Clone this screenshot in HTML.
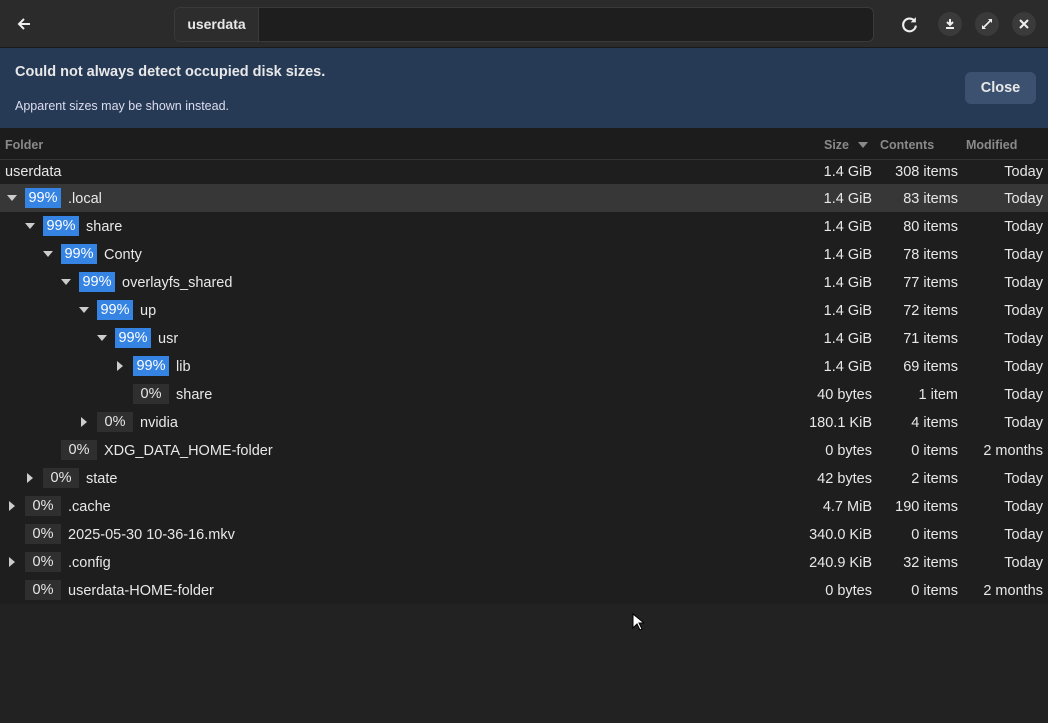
<!DOCTYPE html>
<html><head><meta charset="utf-8"><style>
*{margin:0;padding:0;box-sizing:border-box}
body{width:1048px;height:723px;background:#222;font-family:"Liberation Sans","DejaVu Sans",sans-serif;color:#e8e8e8;position:relative;overflow:hidden;font-size:14.5px}
.hdr{position:absolute;left:0;top:0;width:1048px;height:48px;background:#2b2b2b;border-bottom:1px solid #1a1a1a}
.path{position:absolute;left:174px;top:7px;width:700px;height:35px;background:#1e1e1e;border:1px solid #3a3a3a;border-radius:6px}
.path .seg{position:absolute;left:0;top:0;height:33px;width:84px;background:#2d2d2d;border-right:1px solid #3a3a3a;border-radius:5px 0 0 5px;font-weight:bold;font-size:14px;line-height:33px;text-align:center}
.cb{position:absolute;top:12px;width:24px;height:24px;border-radius:12px;background:#3a3a3a}
.ban{position:absolute;left:0;top:48px;width:1048px;height:80px;background:#263a56}
.ban b{position:absolute;left:15px;top:16px;font-size:14.5px}
.ban span{position:absolute;left:15px;top:51px;font-size:12.5px;color:#dde}
.close{position:absolute;left:965px;top:72px;width:71px;height:32px;background:#3c5170;border-radius:6px;font-weight:bold;line-height:32px;text-align:center;font-size:14.5px}
.ch{position:absolute;left:0;top:128px;width:1048px;height:32px;background:#1c1c1c;border-bottom:1px solid #333;color:#8a8a8a;font-weight:bold;font-size:12.5px}
.ch div{position:absolute;top:10px}
.row{position:absolute;left:0;width:1048px;height:28px;background:#1e1e1e;line-height:30px}
.row .n{position:absolute;white-space:nowrap}
.row .s,.row .c,.row .m{position:absolute;text-align:right}
.s{right:176px}.c{right:90px}.m{right:5px}
.bd{position:absolute;top:4px;width:36px;height:20px;line-height:21px;text-align:center;background:#2f2f2f}
.bd.b{background:#3584e4;color:#fff}
.ar{position:absolute;top:10px;width:0;height:0}
.ar.d{border-left:5px solid transparent;border-right:5px solid transparent;border-top:6px solid #ccc;top:11px}
.ar.r{border-top:5px solid transparent;border-bottom:5px solid transparent;border-left:6px solid #ccc;top:9px}
</style></head><body>
<div class="hdr">
<svg style="position:absolute;left:16px;top:16px" width="16" height="16" viewBox="0 0 16 16"><path d="M14 8H3M8 3L3 8l5 5" stroke="#eee" stroke-width="2" fill="none"/></svg>
<div class="path"><div class="seg">userdata</div></div>
<svg style="position:absolute;left:901px;top:16px" width="17" height="17" viewBox="0 0 16 16"><path d="M13 5A6 6 0 1 0 14 9" stroke="#eee" stroke-width="2" fill="none"/><path d="M14 1v5h-5z" fill="#eee"/></svg>
<div class="cb" style="left:938px"></div><svg style="position:absolute;left:944px;top:18px" width="12" height="12" viewBox="0 0 12 12"><path d="M6 1v6M3 4l3 3 3-3M2 10h8" stroke="#eee" stroke-width="2" fill="none"/></svg>
<div class="cb" style="left:975px"></div><svg style="position:absolute;left:981px;top:18px" width="12" height="12" viewBox="0 0 12 12"><path d="M7 1h4v4zM5 11H1V7z" fill="#eee"/><path d="M9 3L3 9" stroke="#eee" stroke-width="1.6"/></svg>
<div class="cb" style="left:1012px"></div><svg style="position:absolute;left:1019px;top:19px" width="10" height="10" viewBox="0 0 10 10"><path d="M1 1l8 8M9 1l-8 8" stroke="#eee" stroke-width="2"/></svg>
</div>
<div class="ban"><b>Could not always detect occupied disk sizes.</b><span>Apparent sizes may be shown instead.</span></div>
<div class="close">Close</div>
<div class="ch"><div style="left:5px">Folder</div><div style="left:824px">Size</div>
<div style="left:858px;top:14px;width:0;height:0;border-left:5px solid transparent;border-right:5px solid transparent;border-top:6px solid #8a8a8a"></div>
<div style="left:880px">Contents</div><div style="left:966px">Modified</div></div>

<div class="row" style="top:160px;height:24px;line-height:24px"><span class="n" style="left:5px">userdata</span><span class="s">1.4 GiB</span><span class="c">308 items</span><span class="m">Today</span></div>

<div class="row" style="top:184px;background:#373737"><span class="ar d" style="left:7px"></span><span class="bd b" style="left:25px">99%</span><span class="n" style="left:68px">.local</span><span class="s">1.4 GiB</span><span class="c">83 items</span><span class="m">Today</span></div>
<div class="row" style="top:212px"><span class="ar d" style="left:25px"></span><span class="bd b" style="left:43px">99%</span><span class="n" style="left:86px">share</span><span class="s">1.4 GiB</span><span class="c">80 items</span><span class="m">Today</span></div>
<div class="row" style="top:240px"><span class="ar d" style="left:43px"></span><span class="bd b" style="left:61px">99%</span><span class="n" style="left:104px">Conty</span><span class="s">1.4 GiB</span><span class="c">78 items</span><span class="m">Today</span></div>
<div class="row" style="top:268px"><span class="ar d" style="left:61px"></span><span class="bd b" style="left:79px">99%</span><span class="n" style="left:122px">overlayfs_shared</span><span class="s">1.4 GiB</span><span class="c">77 items</span><span class="m">Today</span></div>
<div class="row" style="top:296px"><span class="ar d" style="left:79px"></span><span class="bd b" style="left:97px">99%</span><span class="n" style="left:140px">up</span><span class="s">1.4 GiB</span><span class="c">72 items</span><span class="m">Today</span></div>
<div class="row" style="top:324px"><span class="ar d" style="left:97px"></span><span class="bd b" style="left:115px">99%</span><span class="n" style="left:158px">usr</span><span class="s">1.4 GiB</span><span class="c">71 items</span><span class="m">Today</span></div>
<div class="row" style="top:352px"><span class="ar r" style="left:117px"></span><span class="bd b" style="left:133px">99%</span><span class="n" style="left:176px">lib</span><span class="s">1.4 GiB</span><span class="c">69 items</span><span class="m">Today</span></div>
<div class="row" style="top:380px"><span class="bd" style="left:133px">0%</span><span class="n" style="left:176px">share</span><span class="s">40 bytes</span><span class="c">1 item</span><span class="m">Today</span></div>
<div class="row" style="top:408px"><span class="ar r" style="left:81px"></span><span class="bd" style="left:97px">0%</span><span class="n" style="left:140px">nvidia</span><span class="s">180.1 KiB</span><span class="c">4 items</span><span class="m">Today</span></div>
<div class="row" style="top:436px"><span class="bd" style="left:61px">0%</span><span class="n" style="left:104px">XDG_DATA_HOME-folder</span><span class="s">0 bytes</span><span class="c">0 items</span><span class="m">2 months</span></div>
<div class="row" style="top:464px"><span class="ar r" style="left:27px"></span><span class="bd" style="left:43px">0%</span><span class="n" style="left:86px">state</span><span class="s">42 bytes</span><span class="c">2 items</span><span class="m">Today</span></div>
<div class="row" style="top:492px"><span class="ar r" style="left:9px"></span><span class="bd" style="left:25px">0%</span><span class="n" style="left:68px">.cache</span><span class="s">4.7 MiB</span><span class="c">190 items</span><span class="m">Today</span></div>
<div class="row" style="top:520px"><span class="bd" style="left:25px">0%</span><span class="n" style="left:68px">2025-05-30 10-36-16.mkv</span><span class="s">340.0 KiB</span><span class="c">0 items</span><span class="m">Today</span></div>
<div class="row" style="top:548px"><span class="ar r" style="left:9px"></span><span class="bd" style="left:25px">0%</span><span class="n" style="left:68px">.config</span><span class="s">240.9 KiB</span><span class="c">32 items</span><span class="m">Today</span></div>
<div class="row" style="top:576px"><span class="bd" style="left:25px">0%</span><span class="n" style="left:68px">userdata-HOME-folder</span><span class="s">0 bytes</span><span class="c">0 items</span><span class="m">2 months</span></div>

<svg style="position:absolute;left:632px;top:613px" width="12" height="18" viewBox="0 0 12 18"><path d="M1 1v14l4-4 3 6 2-1-3-6h5z" fill="#fff" stroke="#000" stroke-width="1"/></svg>
</body></html>
